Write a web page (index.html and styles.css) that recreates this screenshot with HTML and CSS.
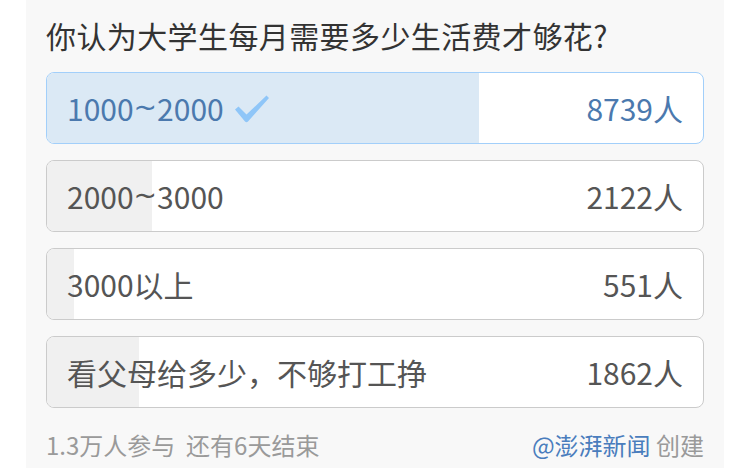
FILE: index.html
```html
<!DOCTYPE html>
<html lang="zh">
<head>
<meta charset="utf-8">
<link rel="stylesheet" href="styles.css">
</head>
<body>
<div class="panel">
  <div class="title">你认为大学生每月需要多少生活费才够花?</div>
  <div class="option selected">
    <div class="fill" style="width:65.8%"></div>
    <span class="label">1000<span class="tilde">~</span>2000<svg class="check" width="36" height="30" viewBox="0 0 36 30"><path d="M1 15.5 L4.5 12.5 L12.5 20.5 L32.5 1.5 L35 4 L14 27.5 Q12.5 29 11 27.5 Z" fill="#8fc6f8"/></svg></span>
    <span class="count">8739人</span>
  </div>
  <div class="option">
    <div class="fill" style="width:16%"></div>
    <span class="label">2000<span class="tilde">~</span>3000</span>
    <span class="count">2122人</span>
  </div>
  <div class="option">
    <div class="fill" style="width:4.15%"></div>
    <span class="label">3000以上</span>
    <span class="count">551人</span>
  </div>
  <div class="option">
    <div class="fill" style="width:14%"></div>
    <span class="label">看父母给多少，不够打工挣</span>
    <span class="count">1862人</span>
  </div>
  <div class="footer">
    <span class="meta">1.3万人参与&nbsp;&nbsp;还有6天结束</span>
    <span class="creator"><span class="author">@澎湃新闻</span> 创建</span>
  </div>
</div>
</body>
</html>
```
FILE: styles.css
```css
html, body {
  margin: 0;
  padding: 0;
  background: #ffffff;
}
body {
  font-family: "Noto Sans CJK SC", "Noto Sans", sans-serif;
  width: 750px;
  height: 468px;
  overflow: hidden;
}
.panel {
  margin-left: 26px;
  width: 698px;
  height: 468px;
  box-sizing: border-box;
  background: #f8f8f8;
  padding: 14px 20px 0 20px;
  display: flex;
  flex-direction: column;
  gap: 16px;
}
.title {
  font-size: 30px;
  line-height: 42px;
  color: #333333;
  white-space: nowrap;
  letter-spacing: 0.4px;
}
.option {
  position: relative;
  height: 72px;
  box-sizing: border-box;
  border: 1px solid #cbcbcb;
  border-radius: 8px;
  background: #ffffff;
  overflow: hidden;
  display: flex;
  align-items: center;
  justify-content: space-between;
  padding: 0 20px;
  font-size: 30px;
  color: #555555;
}
.option .fill {
  position: absolute;
  left: 0;
  top: 0;
  bottom: 0;
  background: #f0f0f0;
}
.option.selected {
  border-color: #a2cffa;
  color: #4b79ae;
}
.option.selected .fill {
  background: #dbe9f5;
}
.label, .count {
  position: relative;
  display: flex;
  align-items: center;
  white-space: nowrap;
}
.tilde {
  font-family: "DejaVu Sans", sans-serif;
  font-size: 28px;
  margin-top: -2px;
}
.check {
  margin-left: 10px;
  margin-top: 2px;
}
.footer {
  display: flex;
  justify-content: space-between;
  align-items: center;
  height: 40px;
  font-size: 24px;
  color: #9a9a9a;
}
.author {
  color: #4a7dbd;
}
```
